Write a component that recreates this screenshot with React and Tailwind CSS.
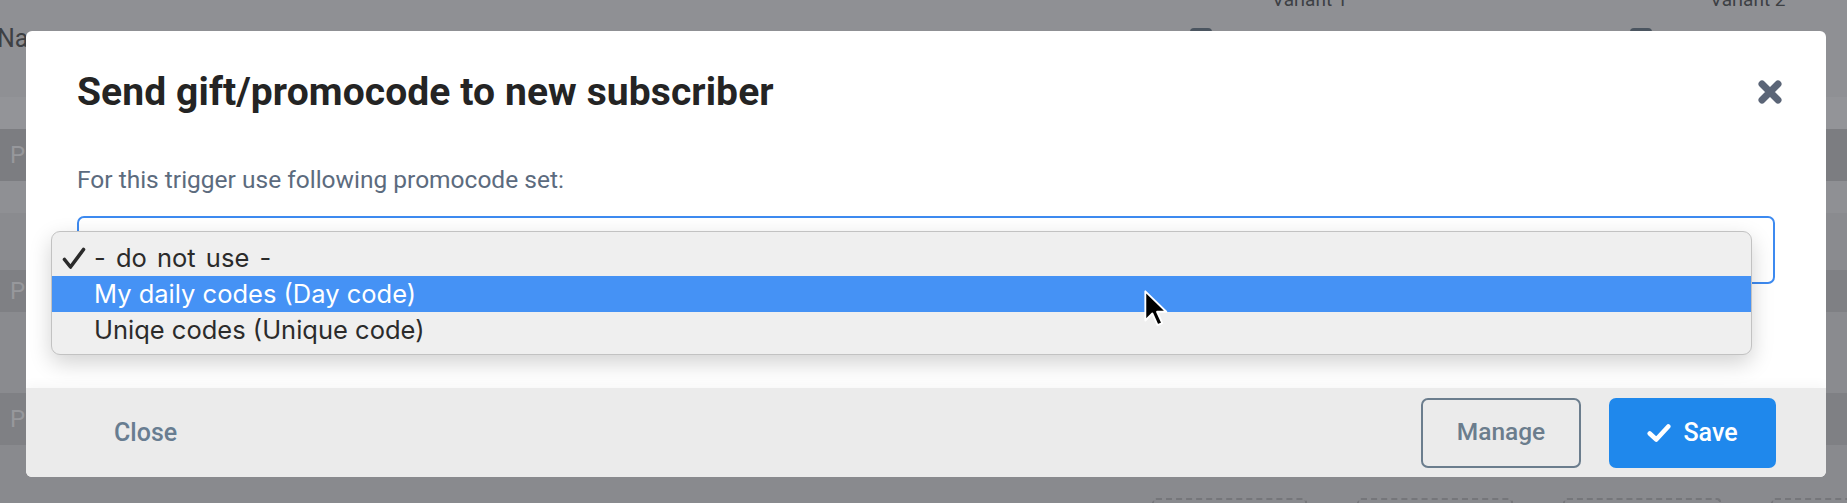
import React from "react";

const rowBands = [
  { h: "h-[97px]", bg: "bg-[#8f9094]", label: "Nam", dark: true },
  { h: "h-[32px]", bg: "bg-[#939498]" },
  { h: "h-[52px]", bg: "bg-[#7c7d81]", label: "Pr" },
  { h: "h-[32px]", bg: "bg-[#8f9094]" },
  { h: "h-[57px]", bg: "bg-[#8a8b8f]" },
  { h: "h-[42px]", bg: "bg-[#7f8084]", label: "Pr" },
  { h: "h-[81px]", bg: "bg-[#8a8b8f]" },
  { h: "h-[52px]", bg: "bg-[#7f8084]", label: "Pr" },
  { h: "h-[58px]", bg: "bg-[#898a8e]" },
];

function CloseX() {
  return (
    <svg width="26" height="26" viewBox="0 0 26 26">
      <path
        d="M5 5 L21 21 M21 5 L5 21"
        stroke="#5b6577"
        strokeWidth="7"
        strokeLinecap="round"
      />
    </svg>
  );
}

function Cursor() {
  return (
    <svg width="28" height="42" viewBox="0 0 24 36">
      <path
        d="M2 2 L2 27 L8 21 L12.5 31 L16.5 29.3 L12 19.5 L20 19.5 Z"
        fill="#000"
        stroke="#fff"
        strokeWidth="1.6"
        strokeLinejoin="round"
      />
    </svg>
  );
}

export default function App() {
  return (
    <div
      className="relative w-[1847px] h-[503px] overflow-hidden bg-[#8d8e92]"
      style={{ fontFamily: "Roboto, 'Liberation Sans', sans-serif" }}
    >
      {/* faded page behind the dialog */}
      <div className="flex flex-col">
        {rowBands.map((r, i) => (
          <div key={i} className={`${r.h} ${r.bg} flex items-center`}>
            {r.label && (
              <span
                className={
                  r.dark
                    ? "-ml-[3px] -mt-[20px] text-[25px] text-[#3d4044]"
                    : "pl-[10px] text-[24px] text-[#97989c]"
                }
              >
                {r.label}
              </span>
            )}
          </div>
        ))}
      </div>

      <div className="absolute top-[-14px] left-[1272px] text-[19px] text-[#3d4044]">
        Variant 1
      </div>
      <div className="absolute top-[-14px] left-[1710px] text-[19px] text-[#3d4044]">
        Variant 2
      </div>
      <div className="absolute top-[28px] left-[1190px] w-[22px] h-[6px] rounded-t bg-[#4b5560]" />
      <div className="absolute top-[28px] left-[1630px] w-[22px] h-[6px] rounded-t bg-[#4b5560]" />

      <div className="absolute bottom-0 left-[1152px] flex gap-[50px]">
        {[155, 156, 158, 120].map((w, i) => (
          <div
            key={i}
            style={{ width: w }}
            className="h-[5px] border-t-2 border-x-2 border-dashed border-[#75767a] rounded-t"
          />
        ))}
      </div>

      {/* dialog */}
      <div className="absolute left-[26px] top-[31px] w-[1800px] h-[446px] rounded-[6px] bg-white flex flex-col overflow-hidden">
        <div className="relative flex-1 px-[51px]">
          <div className="flex items-center justify-between pt-[38px]">
            <h2 className="text-[39px] font-bold text-[#242424] leading-[46px] tracking-[0.1px]">
              Send gift/promocode to new subscriber
            </h2>
            <div className="mr-[-8px]">
              <CloseX />
            </div>
          </div>

          <p className="mt-[50px] text-[24.5px] text-[#5c6b7e] leading-[30px]">
            For this trigger use following promocode set:
          </p>

          <div className="mt-[21px] h-[68px] rounded-[7px] border-2 border-[#3d8af0]" />

          <div
            className="absolute left-[25px] top-[200px] w-[1701px] h-[124px] rounded-[9px] border border-[#c2c2c2] bg-[#efefef] pt-[8px] shadow-[0_8px_22px_rgba(0,0,0,0.18)]"
            style={{ fontFamily: "Inter, 'Noto Sans', sans-serif" }}
          >
            <div className="flex items-center h-[36px] text-[25.5px] text-[#2b2b2b]">
              <span className="w-[42px] pl-[10px] flex items-center">
                <svg width="24" height="23" viewBox="0 0 24 23">
                  <path
                    d="M2.5 12.5 L8.5 20 L21.5 2.5"
                    stroke="#2b2b2b"
                    strokeWidth="3.6"
                    fill="none"
                    strokeLinecap="round"
                    strokeLinejoin="round"
                  />
                </svg>
              </span>
              <span className="[word-spacing:3px]">- do not use -</span>
            </div>
            <div className="flex items-center h-[36px] bg-[#4592f5] text-[25.5px] text-white pl-[42px]">
              My daily codes (Day code)
            </div>
            <div className="flex items-center h-[36px] text-[25.5px] text-[#2b2b2b] pl-[42px]">
              Uniqe codes (Unique code)
            </div>
          </div>

          <div className="absolute left-[1117px] top-[258px]">
            <Cursor />
          </div>
        </div>

        <div className="h-[89px] bg-[#ebebeb] flex items-center justify-between pl-[88px] pr-[50px] shadow-[0_-4px_10px_rgba(0,0,0,0.03)]">
          <button className="text-[25px] font-medium text-[#687d91]">Close</button>
          <div className="flex gap-[28px]">
            <button className="w-[160px] h-[70px] rounded-[7px] border-2 border-[#6b7d8d] text-[24.5px] font-medium text-[#6b7d8d]">
              Manage
            </button>
            <button className="w-[167px] h-[70px] rounded-[7px] bg-[#1f88ec] text-[25px] font-medium text-white flex items-center justify-center gap-[12px]">
              <svg width="24" height="20" viewBox="0 0 22 18">
                <path
                  d="M2.5 9.5 L8.5 15 L19.5 3"
                  stroke="#fff"
                  strokeWidth="4.2"
                  fill="none"
                  strokeLinecap="round"
                  strokeLinejoin="round"
                />
              </svg>
              Save
            </button>
          </div>
        </div>
      </div>
    </div>
  );
}
